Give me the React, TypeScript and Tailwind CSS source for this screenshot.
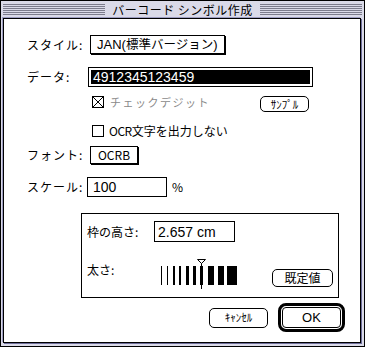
import React from "react";

const jp = "font-['Noto_Sans_CJK_JP',sans-serif]";
const lat = "font-['Liberation_Sans','Noto_Sans_CJK_JP',sans-serif]";

function Stripes() {
  return (
    <div className="flex-1 flex flex-col gap-[1px]">
      {[0, 1, 2, 3, 4, 5].map((i) => (
        <div key={i} className="h-px bg-[#7c7c8c]" />
      ))}
    </div>
  );
}

function CheckBox({ checked }: { checked?: boolean }) {
  return (
    <svg width="12" height="12" viewBox="0 0 12 12" className="block shrink-0">
      <rect x="0.5" y="0.5" width="11" height="11" fill="#fff" stroke="#000" />
      {checked && (
        <>
          <line x1="1" y1="1" x2="11" y2="11" stroke="#000" />
          <line x1="11" y1="1" x2="1" y2="11" stroke="#000" />
        </>
      )}
    </svg>
  );
}

function Bars() {
  const bars: [number, number][] = [
    [161, 1],
    [167, 1],
    [173, 2],
    [179, 2],
    [186, 3],
    [193, 3],
    [200, 3],
    [208, 6],
    [218, 6],
    [227, 10],
  ];
  const ox = 158;
  const oy = 257;
  return (
    <svg width="82" height="33" viewBox="0 0 82 33" className="block shrink-0">
      {bars.map(([x, w], i) => (
        <rect key={i} x={x - ox} y={267 - oy} width={w} height={19} fill="#000" />
      ))}
      <rect x={201 - ox} y={264 - oy} width={1} height={26} fill="#000" />
      <polygon points={`${197 - ox + 0.5},${260 - oy + 0.5} ${205 - ox + 0.5},${260 - oy + 0.5} ${201 - ox + 0.5},${264 - oy + 0.5}`} fill="#fff" stroke="#000" strokeWidth="1" />
    </svg>
  );
}

export default function App() {
  return (
    <div className={`w-[365px] h-[347px] border border-black bg-[#dadae8] flex flex-col ${jp} text-black`}>
      {/* title bar */}
      <div className="h-[17px] flex items-center px-[2px]">
        <Stripes />
        <div className="px-[7px] text-[12px] leading-none tracking-[0.5px]">バーコード シンボル作成</div>
        <Stripes />
      </div>
      {/* content */}
      <div className="ml-[2px] mr-[3px] mb-[3px] flex-1 bg-white border border-black shadow-[-1px_-1px_0_#9c9cc0,1px_1px_0_#6c6c98] flex flex-col pl-[23px]">
        {/* style */}
        <div className="mt-[16px] h-[20px] flex items-start">
          <div className="w-[63px] h-[19px] flex items-center text-[12px] leading-none tracking-[1px]">スタイル:</div>
          <div className="w-[135px] h-[19px] border border-black shadow-[1px_1px_0_#000] flex items-center pl-[6px] text-[12.5px] leading-none">
            <span className={`${lat} text-[13px]`}>JAN(</span>標準バージョン<span className={`${lat} text-[13px]`}>)</span>
          </div>
        </div>
        {/* data */}
        <div className="mt-[12px] h-[20px] flex items-center">
          <div className="w-[61px] text-[12px] leading-none tracking-[1px]">データ:</div>
          <div className="w-[225px] h-[20px] border border-black p-[2px] flex">
            <div className={`flex-1 bg-black text-white text-[14px] leading-none flex items-center pl-[2px] ${lat}`}>4912345123459</div>
          </div>
        </div>
        {/* check digit */}
        <div className="mt-[9px] h-[16px] flex items-start">
          <div className="ml-[65px]">
            <CheckBox checked />
          </div>
          <div className="ml-[6px] w-[150px] h-[12px] flex items-center text-[11px] leading-none tracking-[1.5px] text-[#8a8a8a]">チェックデジット</div>
          <div className="w-[49px] h-[16px] border border-black rounded-[5px] flex items-center justify-center text-[11px] leading-none">ｻﾝﾌﾟﾙ</div>
        </div>
        {/* ocr */}
        <div className="mt-[13px] h-[12px] flex items-center">
          <div className="ml-[65px]">
            <CheckBox />
          </div>
          <div className="ml-[5px] text-[12px] leading-none">
            <span className="tracking-[-0.5px]">OCR</span>文字を出力しない
          </div>
        </div>
        {/* font */}
        <div className="mt-[9px] h-[19px] flex items-start">
          <div className="w-[63px] h-[18px] flex items-center text-[12px] leading-none tracking-[1px]">フォント:</div>
          <div className="w-[48px] h-[18px] border border-black shadow-[1px_1px_0_#000] flex items-center justify-center text-[12px] leading-none">OCRB</div>
        </div>
        {/* scale */}
        <div className="mt-[12px] h-[20px] flex items-center">
          <div className="w-[60px] text-[12px] leading-none tracking-[1px]">スケール:</div>
          <div className={`w-[80px] h-[20px] border border-black flex items-center pl-[5px] text-[14px] leading-none ${lat}`}>100</div>
          <div className="ml-[5px] text-[12px] leading-none">%</div>
        </div>
        {/* group */}
        <div className="mt-[16px] ml-[54px] w-[258px] h-[85px] border border-black flex flex-col pl-[5px]">
          <div className="mt-[7px] h-[21px] flex items-center">
            <div className="w-[67px] text-[12px] leading-none">枠の高さ:</div>
            <div className={`w-[81px] h-[21px] border border-black flex items-center pl-[3px] text-[14px] leading-none ${lat}`}>2.657 cm</div>
          </div>
          <div className="mt-[14px] h-[33px] flex items-start">
            <div className="w-[71px] mt-[8px] text-[12px] leading-none">太さ:</div>
            <Bars />
            <div className="ml-[32px] mt-[13px] w-[61px] h-[18px] border border-black rounded-[5px] flex items-center justify-center text-[12px] leading-none">既定値</div>
          </div>
        </div>
        {/* buttons */}
        <div className="mt-[5px] mr-[15px] flex items-center justify-end">
          <div className="w-[59px] h-[20px] border border-black rounded-[5px] flex items-center justify-center text-[11px] leading-none">ｷｬﾝｾﾙ</div>
          <div className="ml-[10px] w-[67px] h-[29px] border-[3px] border-black rounded-[8px] p-[1px] flex">
            <div className={`flex-1 border border-black rounded-[4px] flex items-center justify-center text-[13px] leading-none ${lat}`}>OK</div>
          </div>
        </div>
      </div>
    </div>
  );
}
